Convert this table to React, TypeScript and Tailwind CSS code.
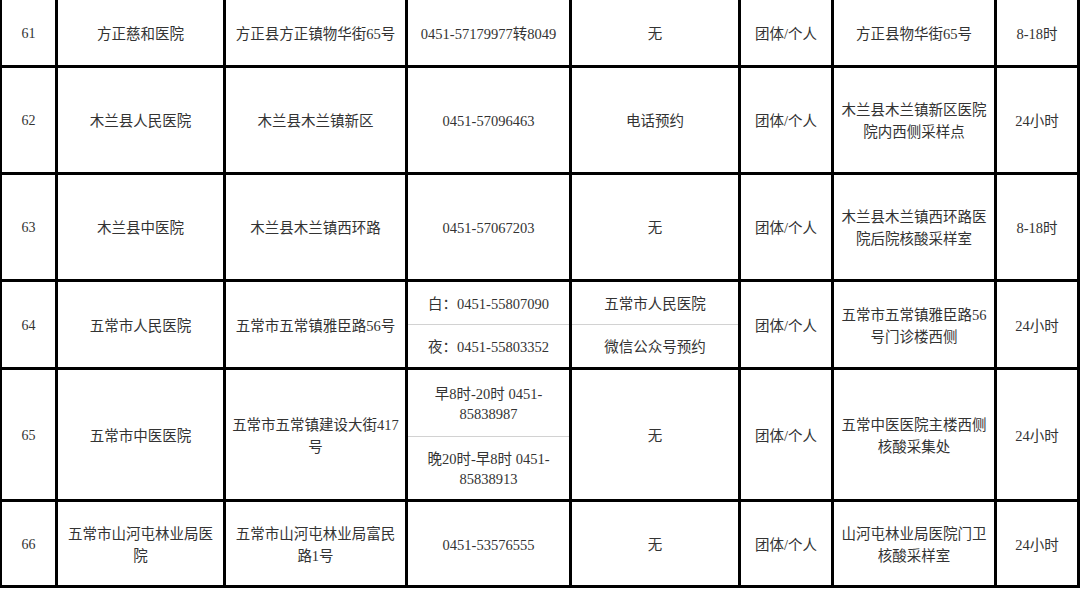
import React from "react";

const font = {
  fontFamily: '"Liberation Serif", "Noto Sans CJK SC", serif',
};

function Cell({ children, small }: { children: React.ReactNode; small?: boolean }) {
  return (
    <div
      className={`bg-white flex items-center justify-center text-center text-[#333] whitespace-nowrap ${
        small ? "text-[14px]" : "text-[14.5px]"
      } leading-[22px] pt-[2px]`}
    >
      <div>{children}</div>
    </div>
  );
}

function Split({ top, bottom, topH, lh = "leading-[22px]" }: { top: React.ReactNode; bottom: React.ReactNode; topH: string; lh?: string }) {
  return (
    <div className={`bg-white flex flex-col text-center text-[#333] text-[14.5px] whitespace-nowrap ${lh}`}>
      <div className={`${topH} flex items-center justify-center border-b border-[#d2d2d2] pt-[2px]`}>
        <div>{top}</div>
      </div>
      <div className="flex-1 flex items-center justify-center pt-[2px]">
        <div>{bottom}</div>
      </div>
    </div>
  );
}

export default function App() {
  return (
    <div className="w-[1080px] h-[589px] bg-white" style={font}>
      <div className="w-[1080px] bg-black pl-[2px] pr-[3px] pb-[3px] grid grid-cols-[53px_165px_179px_161px_166px_90px_160px_80px] grid-rows-[65px_104px_104px_85px_129px_83px] gap-[3px]">
        {/* 61 */}
        <Cell small>61</Cell>
        <Cell>方正慈和医院</Cell>
        <Cell>方正县方正镇物华街65号</Cell>
        <Cell>0451-57179977转8049</Cell>
        <Cell>无</Cell>
        <Cell>团体/个人</Cell>
        <Cell>方正县物华街65号</Cell>
        <Cell>8-18时</Cell>

        {/* 62 */}
        <Cell small>62</Cell>
        <Cell>木兰县人民医院</Cell>
        <Cell>木兰县木兰镇新区</Cell>
        <Cell>0451-57096463</Cell>
        <Cell>电话预约</Cell>
        <Cell>团体/个人</Cell>
        <Cell>
          木兰县木兰镇新区医院
          <br />
          院内西侧采样点
        </Cell>
        <Cell>24小时</Cell>

        {/* 63 */}
        <Cell small>63</Cell>
        <Cell>木兰县中医院</Cell>
        <Cell>木兰县木兰镇西环路</Cell>
        <Cell>0451-57067203</Cell>
        <Cell>无</Cell>
        <Cell>团体/个人</Cell>
        <Cell>
          木兰县木兰镇西环路医
          <br />
          院后院核酸采样室
        </Cell>
        <Cell>8-18时</Cell>

        {/* 64 */}
        <Cell small>64</Cell>
        <Cell>五常市人民医院</Cell>
        <Cell>五常市五常镇雅臣路56号</Cell>
        <Split topH="h-[43px]" top={<>白：0451-55807090</>} bottom={<>夜：0451-55803352</>} />
        <Split topH="h-[43px]" top={<>五常市人民医院</>} bottom={<>微信公众号预约</>} />
        <Cell>团体/个人</Cell>
        <Cell>
          五常市五常镇雅臣路56
          <br />
          号门诊楼西侧
        </Cell>
        <Cell>24小时</Cell>

        {/* 65 */}
        <Cell small>65</Cell>
        <Cell>五常市中医医院</Cell>
        <Cell>
          五常市五常镇建设大街417
          <br />
          号
        </Cell>
        <Split
          topH="h-[67px]"
          lh="leading-[20px]"
          top={
            <>
              早8时-20时 0451-
              <br />
              85838987
            </>
          }
          bottom={
            <>
              晚20时-早8时 0451-
              <br />
              85838913
            </>
          }
        />
        <Cell>无</Cell>
        <Cell>团体/个人</Cell>
        <Cell>
          五常中医医院主楼西侧
          <br />
          核酸采集处
        </Cell>
        <Cell>24小时</Cell>

        {/* 66 */}
        <Cell small>66</Cell>
        <Cell>
          五常市山河屯林业局医
          <br />
          院
        </Cell>
        <Cell>
          五常市山河屯林业局富民
          <br />
          路1号
        </Cell>
        <Cell>0451-53576555</Cell>
        <Cell>无</Cell>
        <Cell>团体/个人</Cell>
        <Cell>
          山河屯林业局医院门卫
          <br />
          核酸采样室
        </Cell>
        <Cell>24小时</Cell>
      </div>
    </div>
  );
}
